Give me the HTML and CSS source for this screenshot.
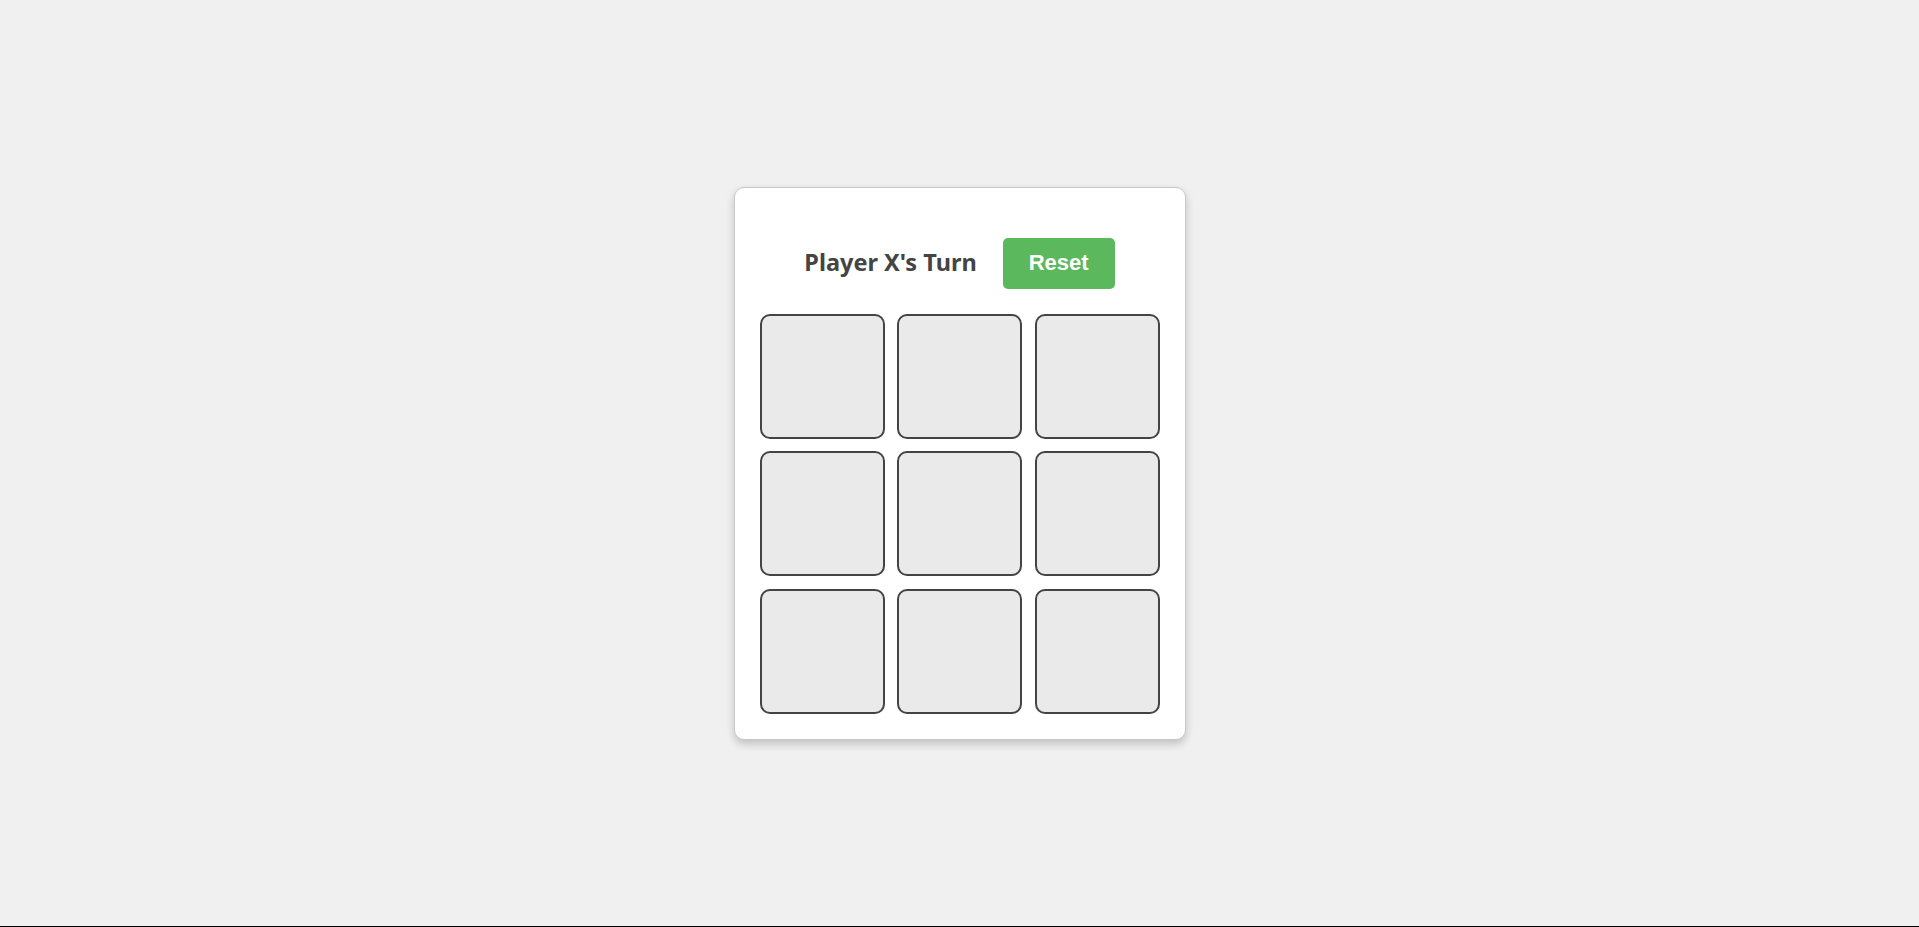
FILE: index.html
```html
<!DOCTYPE html>
<html lang="en">
<head>
<meta charset="utf-8">
<title>Tic Tac Toe</title>
<link rel="stylesheet" href="styles.css">
</head>
<body>
<div class="card">
  <div class="header">
    <h2 class="status">Player X's Turn</h2>
    <button class="reset">Reset</button>
  </div>
  <div class="board">
    <div class="cell"></div>
    <div class="cell"></div>
    <div class="cell"></div>
    <div class="cell"></div>
    <div class="cell"></div>
    <div class="cell"></div>
    <div class="cell"></div>
    <div class="cell"></div>
    <div class="cell"></div>
  </div>
</div>
</body>
</html>
```
FILE: styles.css
```css
html, body {
  margin: 0;
  padding: 0;
}
body {
  box-sizing: border-box;
  height: 100vh;
  background: #f0f0f0;
  border-bottom: 1px solid #000;
  display: flex;
  align-items: center;
  justify-content: center;
  font-family: "Noto Sans", "Open Sans", sans-serif;
}
.card {
  box-sizing: border-box;
  width: 452px;
  background: #fff;
  border: 1px solid #c8c8c8;
  border-radius: 10px;
  box-shadow: 0 4px 8px rgba(0, 0, 0, 0.2);
  padding: 25px;
}
.header {
  display: flex;
  align-items: center;
  justify-content: center;
  gap: 26px;
  margin-top: 25px;
  margin-bottom: 25px;
  height: 51px;
}
.status {
  margin: 0 0 2px 0;
  font-size: 23.5px;
  font-weight: 700;
  color: #444;
}
.reset {
  box-sizing: border-box;
  width: 112px;
  height: 51px;
  border: none;
  border-radius: 5px;
  background: #5cb85c;
  color: #fff;
  font-family: "Liberation Sans", Arial, sans-serif;
  font-weight: 700;
  font-size: 22px;
  padding: 0;
  cursor: pointer;
}
.board {
  display: grid;
  grid-template-columns: repeat(3, 125px);
  grid-template-rows: repeat(3, 125px);
  justify-content: space-between;
  align-content: space-between;
  height: 400px;
}
.cell {
  box-sizing: border-box;
  background: #eaeaea;
  border: 2px solid #444;
  border-radius: 10px;
}
```
